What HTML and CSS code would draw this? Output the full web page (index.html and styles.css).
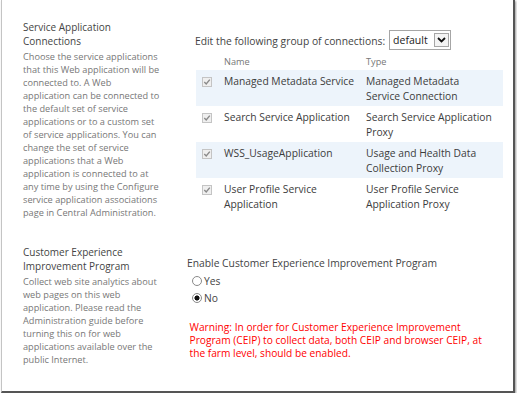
FILE: index.html
```html
<!DOCTYPE html>
<html>
<head>
    <title>Web Application Service Connections</title>
    <link rel="stylesheet" href="styles.css">
</head>
<body>
    <div class="frame">
        <div class="section">
            <div class="section-info">
                <h3 class="section-title">Service Application<br>Connections</h3>
                <p class="section-desc">Choose the service applications<br>that this Web application will be<br>connected to. A Web<br>application can be connected to<br>the default set of service<br>applications or to a custom set<br>of service applications. You can<br>change the set of service<br>applications that a Web<br>application is connected to at<br>any time by using the Configure<br>service application associations<br>page in Central Administration.</p>
            </div>
            <div class="section-body connections">
                <div class="group-row">
                    <span class="group-label">Edit the following group of connections:</span>
                    <div class="dropdown">
                        <span class="dropdown-value">default</span>
                        <span class="dropdown-arrow">
                            <svg width="9" height="6" viewBox="0 0 9 6"><polyline points="1,1 4.5,4.5 8,1" fill="none" stroke="#111" stroke-width="1.8"/></svg>
                        </span>
                    </div>
                </div>
                <table class="conn-table">
                    <thead>
                        <tr><th class="check-col"></th><th class="name-col">Name</th><th>Type</th></tr>
                    </thead>
                    <tbody>
                        <tr class="alt">
                            <td class="check-col"><svg class="checkbox" width="10" height="10" viewBox="0 0 10 10"><rect x="0.5" y="0.5" width="9" height="9" fill="#efefef" stroke="#c4c4c4"/><polyline points="2.3,5 4.2,7 7.8,2.6" fill="none" stroke="#8a8a8a" stroke-width="1.4"/></svg></td>
                            <td>Managed Metadata Service</td>
                            <td>Managed Metadata<br>Service Connection</td>
                        </tr>
                        <tr>
                            <td class="check-col"><svg class="checkbox" width="10" height="10" viewBox="0 0 10 10"><rect x="0.5" y="0.5" width="9" height="9" fill="#efefef" stroke="#c4c4c4"/><polyline points="2.3,5 4.2,7 7.8,2.6" fill="none" stroke="#8a8a8a" stroke-width="1.4"/></svg></td>
                            <td>Search Service Application</td>
                            <td>Search Service Application<br>Proxy</td>
                        </tr>
                        <tr class="alt">
                            <td class="check-col"><svg class="checkbox" width="10" height="10" viewBox="0 0 10 10"><rect x="0.5" y="0.5" width="9" height="9" fill="#efefef" stroke="#c4c4c4"/><polyline points="2.3,5 4.2,7 7.8,2.6" fill="none" stroke="#8a8a8a" stroke-width="1.4"/></svg></td>
                            <td>WSS_UsageApplication</td>
                            <td>Usage and Health Data<br>Collection Proxy</td>
                        </tr>
                        <tr>
                            <td class="check-col"><svg class="checkbox" width="10" height="10" viewBox="0 0 10 10"><rect x="0.5" y="0.5" width="9" height="9" fill="#efefef" stroke="#c4c4c4"/><polyline points="2.3,5 4.2,7 7.8,2.6" fill="none" stroke="#8a8a8a" stroke-width="1.4"/></svg></td>
                            <td>User Profile Service<br>Application</td>
                            <td>User Profile Service<br>Application Proxy</td>
                        </tr>
                    </tbody>
                </table>
            </div>
        </div>

        <div class="section ceip">
            <div class="section-info">
                <h3 class="section-title">Customer Experience<br>Improvement Program</h3>
                <p class="section-desc">Collect web site analytics about<br>web pages on this web<br>application. Please read the<br>Administration guide before<br>turning this on for web<br>applications available over the<br>public Internet.</p>
            </div>
            <div class="section-body">
                <div class="field-label">Enable Customer Experience Improvement Program</div>
                <label class="radio"><input type="radio" name="ceip">Yes</label>
                <label class="radio"><input type="radio" name="ceip" checked>No</label>
                <p class="warning">Warning: In order for Customer Experience Improvement<br>Program (CEIP) to collect data, both CEIP and browser CEIP, at<br>the farm level, should be enabled.</p>
            </div>
        </div>
    </div>
</body>
</html>
```

FILE: styles.css
```css
body {
    margin: 0;
    background-color: #ffffff;
    font-family: "Open Sans", "Noto Sans", sans-serif;
    color: #444444;
}

/* screenshot frame with its drop shadow */
.frame {
    margin-left: 1px;
    width: 490px;
    height: 371px;
    padding: 20px 0 0 21px;
    border-left: 1px solid #c4c4c4;
    border-right: 2px solid #555555;
    border-bottom: 2px solid #555555;
    box-shadow: 1px 1px 2px rgba(0, 0, 0, 0.4);
}

.section {
    display: grid;
    grid-template-columns: 164px 1fr;
}

.section.ceip {
    margin-top: 26px;
}

.section-title {
    margin: 0;
    font-size: 10px;
    font-weight: normal;
    line-height: 14px;
    color: #444444;
}

.section-desc {
    margin: 2px 0 0;
    font-size: 9.2px;
    line-height: 13px;
    color: #777777;
    white-space: nowrap;
}

.section-body {
    font-size: 10.3px;
}

.connections {
    padding: 10px 0 0 8px;
}

.group-row {
    display: flex;
    align-items: center;
    gap: 4px;
    white-space: nowrap;
}

.group-label {
    padding-top: 2px;
}

.dropdown {
    display: flex;
    align-items: center;
    justify-content: space-between;
    box-sizing: border-box;
    width: 62px;
    height: 20px;
    padding: 0 1px 0 3px;
    border: 1px solid #a6a6a6;
    background-color: #ffffff;
    color: #222222;
    font-size: 10.5px;
}

.dropdown-arrow {
    display: flex;
    align-items: center;
    justify-content: center;
    box-sizing: border-box;
    width: 15px;
    height: 14px;
    border: 1px solid #a6a6a6;
    background-color: #f4f4f4;
}

.conn-table {
    margin: 5px 0 0 1px;
    width: 307px;
    border-collapse: collapse;
    table-layout: fixed;
}

.conn-table th {
    padding: 0 0 1px;
    font-size: 9.2px;
    font-weight: normal;
    line-height: 14px;
    text-align: left;
    color: #777777;
}

.conn-table td {
    padding: 4px 0 2px;
    line-height: 15px;
    vertical-align: top;
    white-space: nowrap;
    color: #3c3c3c;
}

.conn-table .check-col {
    width: 28px;
}

.conn-table .name-col {
    width: 142px;
}

.conn-table td.check-col {
    padding-left: 6px;
}

.checkbox {
    display: block;
    margin-top: 3px;
}

.conn-table tr.alt td {
    background-color: #edf4fb;
}

.field-label {
    padding-top: 11px;
    line-height: 14px;
}

.radio {
    display: flex;
    align-items: center;
    gap: 2px;
    height: 16.5px;
    margin-left: 5px;
}

.field-label + .radio {
    margin-top: 3px;
}

.radio input {
    appearance: none;
    margin: 0;
    width: 10px;
    height: 10px;
    border: 1px solid #8a8a8a;
    border-radius: 50%;
    background-color: #ffffff;
}

.radio input:checked {
    background: radial-gradient(circle, #111111 0 2.3px, #ffffff 2.8px);
}

.warning {
    margin: 15px 0 0;
    padding-left: 2.5px;
    font-size: 10.2px;
    line-height: 13px;
    color: #ff0000;
    white-space: nowrap;
}
```
